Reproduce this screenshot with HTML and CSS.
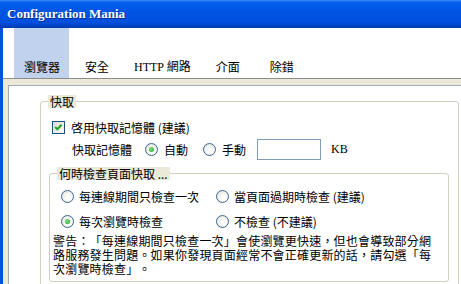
FILE: index.html
```html
<!DOCTYPE html>
<html lang="zh-Hant">
<head>
    <meta charset="UTF-8">
    <title>Configuration Mania</title>
    <link rel="stylesheet" href="styles.css">
</head>
<body>
    <div class="window">
        <div class="titlebar">Configuration Mania</div>
        <div class="client">
            <div class="tabs">
                <div class="tab active"><span>瀏覽器</span></div>
                <div class="tab"><span>安全</span></div>
                <div class="tab"><span><span class="latin">HTTP</span> 網路</span></div>
                <div class="tab"><span>介面</span></div>
                <div class="tab last"><span>除錯</span></div>
            </div>
            <div class="frame">
                <div class="panel">
                    <fieldset class="group outer">
                        <legend>快取</legend>
                        <div class="check-row">
                            <span class="checkbox">
                                <svg width="11" height="11" viewBox="0 0 11 11"><polyline points="2.2,5 4.3,7.2 8.6,2.8" fill="none" stroke="#21a121" stroke-width="2"/></svg>
                            </span>
                            <span>啓用快取記憶體 (建議)</span>
                        </div>
                        <div class="size-row">
                            <span class="size-label">快取記憶體</span>
                            <span class="choice"><span class="radio checked"></span>自動</span>
                            <span class="choice"><span class="radio"></span>手動</span>
                            <span class="textbox"></span>
                            <span class="latin unit">KB</span>
                        </div>
                        <fieldset class="group inner">
                            <legend>何時檢查頁面快取 ...</legend>
                            <div class="options">
                                <span class="choice"><span class="radio"></span>每連線期間只檢查一次</span>
                                <span class="choice"><span class="radio"></span>當頁面過期時檢查 (建議)</span>
                                <span class="choice"><span class="radio checked"></span>每次瀏覽時檢查</span>
                                <span class="choice"><span class="radio"></span>不檢查 (不建議)</span>
                            </div>
                            <p class="warning">警告：「每連線期間只檢查一次」會使瀏覽更快速，但也會導致部分網路服務發生問題。如果你發現頁面經常不會正確更新的話，請勾選「每次瀏覽時檢查」。</p>
                        </fieldset>
                    </fieldset>
                </div>
            </div>
        </div>
    </div>
</body>
</html>
```

FILE: styles.css
```css
* {
    box-sizing: border-box;
}
body {
    margin: 0;
    width: 461px;
    height: 284px;
    overflow: hidden;
    font-family: "Noto Sans CJK TC", sans-serif;
    font-size: 12px;
    color: #000;
    background: #fff;
    text-spacing-trim: space-all;
}
.latin {
    font-family: "Liberation Serif", serif;
}
.window {
    height: 284px;
    display: flex;
    flex-direction: column;
}
.titlebar {
    height: 28px;
    flex: none;
    display: flex;
    align-items: center;
    padding-left: 7px;
    font-family: "Liberation Serif", serif;
    font-weight: bold;
    font-size: 13px;
    color: #fff;
    text-shadow: 1px 1px #0a2a8a;
    background: linear-gradient(#3d8ef8 0, #0a61ee 2px, #0059eb 8px, #0053e1 12px, #0050df 22px, #0046cb 25px, #003aa8 28px);
}
.client {
    flex: 1;
    display: flex;
    flex-direction: column;
    border-left: 3px solid #0552e2;
    min-height: 0;
}
.tabs {
    height: 50px;
    flex: none;
    display: flex;
    gap: 6px;
    padding-left: 11px;
    background: #fff;
}
.tab {
    display: flex;
    align-items: flex-end;
    padding: 0 9px 4px 10px;
    line-height: 14px;
}
.tab.active {
    background: #c1d2ee;
}
.tab.last {
    margin-left: 5px;
}
.frame {
    flex: 1;
    display: flex;
    min-height: 0;
    padding: 6px 0 0 5px;
    background: #ece9d8;
    border-top: 1px solid #8c8c8c;
}
.panel {
    flex: 1;
    overflow: hidden;
    background: #fff;
    border-top: 1px solid #a2abb4;
    border-left: 1px solid #a2abb4;
}
.group {
    margin: 0;
    padding: 0;
    min-width: 0;
    border: 1px solid #d0d0bf;
    border-radius: 3px;
}
.group legend {
    margin-left: 7px;
    padding: 0 2px;
    line-height: 13px;
    background: #ece9d8;
}
.outer {
    margin: 9px 2px 0 31px;
    height: 200px;
}
.check-row {
    display: flex;
    align-items: center;
    gap: 6px;
    height: 16px;
    margin-top: 11px;
    padding-left: 11px;
}
.checkbox {
    width: 13px;
    height: 13px;
    display: flex;
    align-items: center;
    justify-content: center;
    border: 1px solid #1c5180;
    background: linear-gradient(135deg, #dcdcd5, #fbfbf9);
}
.size-row {
    display: flex;
    align-items: center;
    height: 21px;
    margin-top: 4px;
    padding-left: 31px;
}
.size-label {
    margin-right: 13px;
}
.choice {
    display: inline-flex;
    align-items: center;
    gap: 6px;
    height: 16px;
}
.size-row .choice + .choice {
    margin-left: 15px;
}
.radio {
    width: 13px;
    height: 13px;
    flex: none;
    border-radius: 50%;
    border: 1px solid #3a6790;
    background: radial-gradient(circle at 60% 60%, #fff 20%, #dcdcd5 100%);
    display: flex;
    align-items: center;
    justify-content: center;
}
.radio.checked::after {
    content: "";
    width: 5px;
    height: 5px;
    border-radius: 50%;
    background: radial-gradient(circle at 40% 40%, #7ee07e, #21a121);
}
.textbox {
    width: 64px;
    height: 21px;
    margin-left: 11px;
    border: 1px solid #7f9db9;
    background: #fff;
}
.unit {
    margin-left: 10px;
}
.inner {
    margin: 7px 9px 0 8px;
    padding-bottom: 5px;
}
.options {
    display: grid;
    grid-template-columns: 155px auto;
    row-gap: 9px;
    margin-top: 8px;
    padding-left: 11px;
}
.options .choice {
    gap: 5px;
}
.warning {
    margin: 5px 0 0;
    padding: 0 10px 0 3px;
    line-height: 14px;
    letter-spacing: 0.2px;
}
```
